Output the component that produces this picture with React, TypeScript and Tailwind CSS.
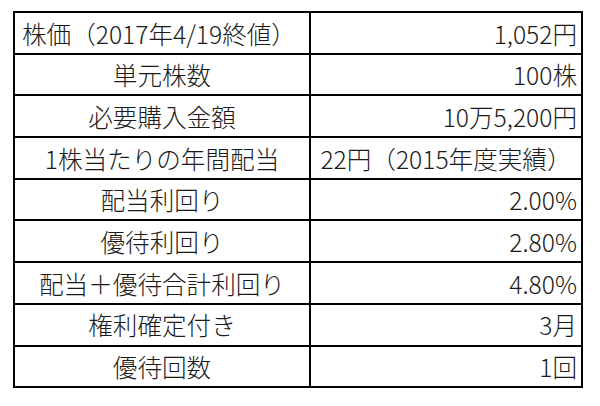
const rows = [
  { label: '株価（2017年4/19終値）', value: '1,052円', labelLeft: true, valueCenter: false },
  { label: '単元株数', value: '100株', labelLeft: false, valueCenter: false },
  { label: '必要購入金額', value: '10万5,200円', labelLeft: false, valueCenter: false },
  { label: '1株当たりの年間配当', value: '22円（2015年度実績）', labelLeft: false, valueCenter: true },
  { label: '配当利回り', value: '2.00%', labelLeft: false, valueCenter: false },
  { label: '優待利回り', value: '2.80%', labelLeft: false, valueCenter: false },
  { label: '配当＋優待合計利回り', value: '4.80%', labelLeft: false, valueCenter: false },
  { label: '権利確定付き', value: '3月', labelLeft: false, valueCenter: false },
  { label: '優待回数', value: '1回', labelLeft: false, valueCenter: false },
];

export default function App() {
  return (
    <div className="h-[406px] w-[600px] bg-white pl-[13px] pt-[11px] font-['Noto_Sans_CJK_JP','Noto_Sans',sans-serif] text-[24.6px] font-light leading-none text-[#1a1a1a]">
      <div className="w-[570px] border-2 border-black">
        {rows.map((row, i) => (
          <div
            key={row.label}
            className={`grid grid-cols-[296px_1fr] ${i === 0 ? 'h-[39.7px]' : 'h-[41.7px] border-t-2 border-black'}`}
          >
            <div
              className={`flex items-center border-r-2 border-black ${row.labelLeft ? 'justify-start pl-[7px]' : 'justify-center'}`}
            >
              {row.label}
            </div>
            <div className={`flex items-center ${row.valueCenter ? 'justify-center' : 'justify-end pr-[4px]'}`}>
              {row.value}
            </div>
          </div>
        ))}
      </div>
    </div>
  );
}
